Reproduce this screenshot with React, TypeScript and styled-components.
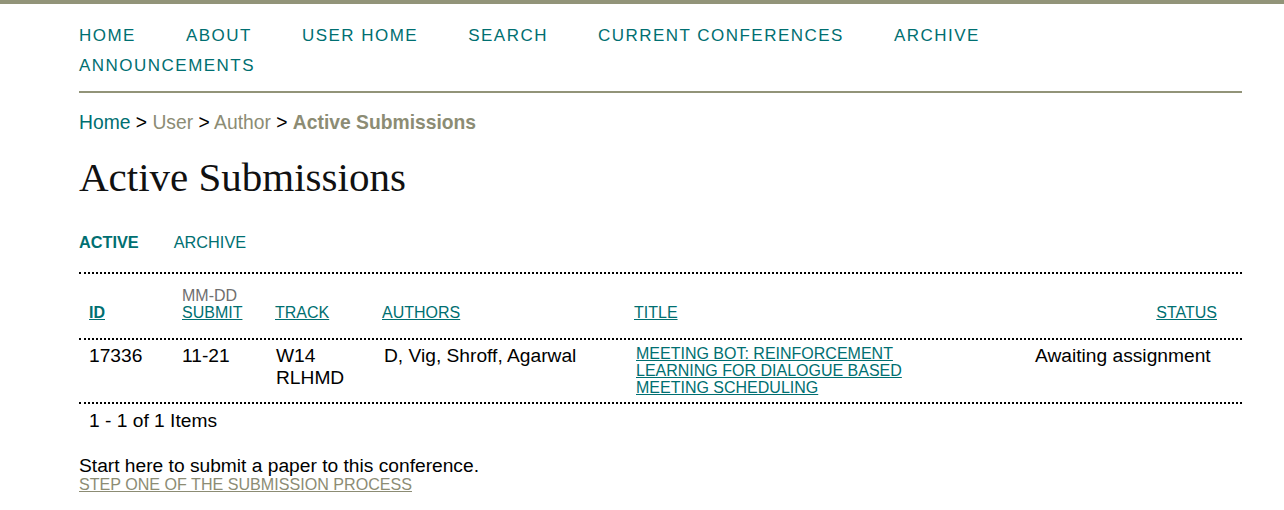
import styled, { createGlobalStyle } from 'styled-components'

const colors = {
  teal: '#006f71',
  olive: '#8c8c74',
  bar: '#929479',
  text: '#000',
  muted: '#6f6f6f',
}

const GlobalStyle = createGlobalStyle`
  body {
    margin: 0;
    background: #fff;
    font-family: "Liberation Sans", Arial, sans-serif;
    color: ${colors.text};
  }
`

const Page = styled.div`
  border-top: 4px solid ${colors.bar};
  min-height: 506px;
`

const Container = styled.div`
  margin: 0 42px 0 79px;
`

const NavBar = styled.ul`
  list-style: none;
  margin: 0;
  padding: 17px 0 10px;
  display: flex;
  flex-wrap: wrap;
  border-bottom: 2px solid ${colors.bar};
`

const NavItem = styled.li`
  margin-right: 50px;
  font-size: 17px;
  line-height: 30px;
  letter-spacing: 1.48px;
  a {
    color: ${colors.teal};
    text-decoration: none;
  }
`

const Breadcrumb = styled.div`
  margin-top: 19px;
  font-size: 19.3px;
  line-height: 22px;
`

const Crumb = styled.a<{ $current?: boolean; $muted?: boolean }>`
  color: ${({ $muted }) => ($muted ? colors.olive : colors.teal)};
  font-weight: ${({ $current }) => ($current ? 'bold' : 'normal')};
  text-decoration: none;
`

const Title = styled.h1`
  margin: 20px 0 0;
  font-family: "Liberation Serif", "Times New Roman", serif;
  font-weight: normal;
  font-size: 41px;
  line-height: 47px;
  color: #111;
`

const Tabs = styled.div`
  margin-top: 31px;
  display: flex;
  gap: 35px;
  font-size: 16.3px;
  line-height: 20px;
`

const Tab = styled.a<{ $active?: boolean }>`
  color: ${colors.teal};
  font-weight: ${({ $active }) => ($active ? 'bold' : 'normal')};
  text-decoration: none;
`

const columns = '93px 93px 107px 252px 401px 1fr'

const Table = styled.div`
  margin-top: 20px;
  border-top: 2px dotted #000;
`

const Row = styled.div<{ $head?: boolean }>`
  display: grid;
  grid-template-columns: ${columns};
  align-items: ${({ $head }) => ($head ? 'end' : 'start')};
  padding: ${({ $head }) => ($head ? '13px 0 17px' : '5px 0 6px')};
  border-bottom: 2px dotted #000;
`

const HeadCell = styled.div<{ $right?: boolean }>`
  padding: ${({ $right }) => ($right ? '0 25px 0 10px' : '0 0 0 10px')};
  text-align: ${({ $right }) => ($right ? 'right' : 'left')};
  font-size: 16px;
  line-height: 17px;
`

const SortLink = styled.a<{ $active?: boolean }>`
  color: ${colors.teal};
  text-decoration: underline;
  font-weight: ${({ $active }) => ($active ? 'bold' : 'normal')};
`

const Hint = styled.div`
  color: ${colors.muted};
`

const Cell = styled.div<{ $indent?: number }>`
  padding-left: ${({ $indent = 10 }) => $indent}px;
  font-size: 19.2px;
  line-height: 22px;
`

const PaperLink = styled.a`
  display: block;
  max-width: 300px;
  padding-left: 2px;
  font-size: 16px;
  line-height: 17px;
  color: ${colors.teal};
  text-decoration: underline;
`

const Count = styled.div`
  padding: 6px 0 0 10px;
  font-size: 19.2px;
  line-height: 22px;
`

const Intro = styled.div`
  margin-top: 24px;
  display: flex;
  flex-direction: column;
  align-items: flex-start;
`

const IntroText = styled.p`
  margin: 0;
  font-size: 19.2px;
  line-height: 20px;
`

const StepLink = styled.a`
  font-size: 16.1px;
  line-height: 16px;
  color: ${colors.olive};
  text-decoration: underline;
`

const navLinks = ['HOME', 'ABOUT', 'USER HOME', 'SEARCH', 'CURRENT CONFERENCES', 'ARCHIVE', 'ANNOUNCEMENTS']

export default function App() {
  return (
    <Page>
      <GlobalStyle />
      <Container>
        <NavBar>
          {navLinks.map((label) => (
            <NavItem key={label}>
              <a href="#">{label}</a>
            </NavItem>
          ))}
        </NavBar>

        <Breadcrumb>
          <Crumb href="#">Home</Crumb> &gt; <Crumb href="#" $muted>User</Crumb> &gt;{' '}
          <Crumb href="#" $muted>Author</Crumb> &gt;{' '}
          <Crumb href="#" $muted $current>Active Submissions</Crumb>
        </Breadcrumb>

        <Title>Active Submissions</Title>

        <Tabs>
          <Tab href="#" $active>ACTIVE</Tab>
          <Tab href="#">ARCHIVE</Tab>
        </Tabs>

        <Table>
          <Row $head>
            <HeadCell><SortLink href="#" $active>ID</SortLink></HeadCell>
            <HeadCell>
              <Hint>MM-DD</Hint>
              <SortLink href="#">SUBMIT</SortLink>
            </HeadCell>
            <HeadCell><SortLink href="#">TRACK</SortLink></HeadCell>
            <HeadCell><SortLink href="#">AUTHORS</SortLink></HeadCell>
            <HeadCell><SortLink href="#">TITLE</SortLink></HeadCell>
            <HeadCell $right><SortLink href="#">STATUS</SortLink></HeadCell>
          </Row>
          <Row>
            <Cell>17336</Cell>
            <Cell>11-21</Cell>
            <Cell $indent={11}>W14<br />RLHMD</Cell>
            <Cell $indent={12}>D, Vig, Shroff, Agarwal</Cell>
            <Cell>
              <PaperLink href="#">MEETING BOT: REINFORCEMENT LEARNING FOR DIALOGUE BASED MEETING SCHEDULING</PaperLink>
            </Cell>
            <Cell>Awaiting assignment</Cell>
          </Row>
          <Count>1 - 1 of 1 Items</Count>
        </Table>

        <Intro>
          <IntroText>Start here to submit a paper to this conference.</IntroText>
          <StepLink href="#">STEP ONE OF THE SUBMISSION PROCESS</StepLink>
        </Intro>
      </Container>
    </Page>
  )
}
